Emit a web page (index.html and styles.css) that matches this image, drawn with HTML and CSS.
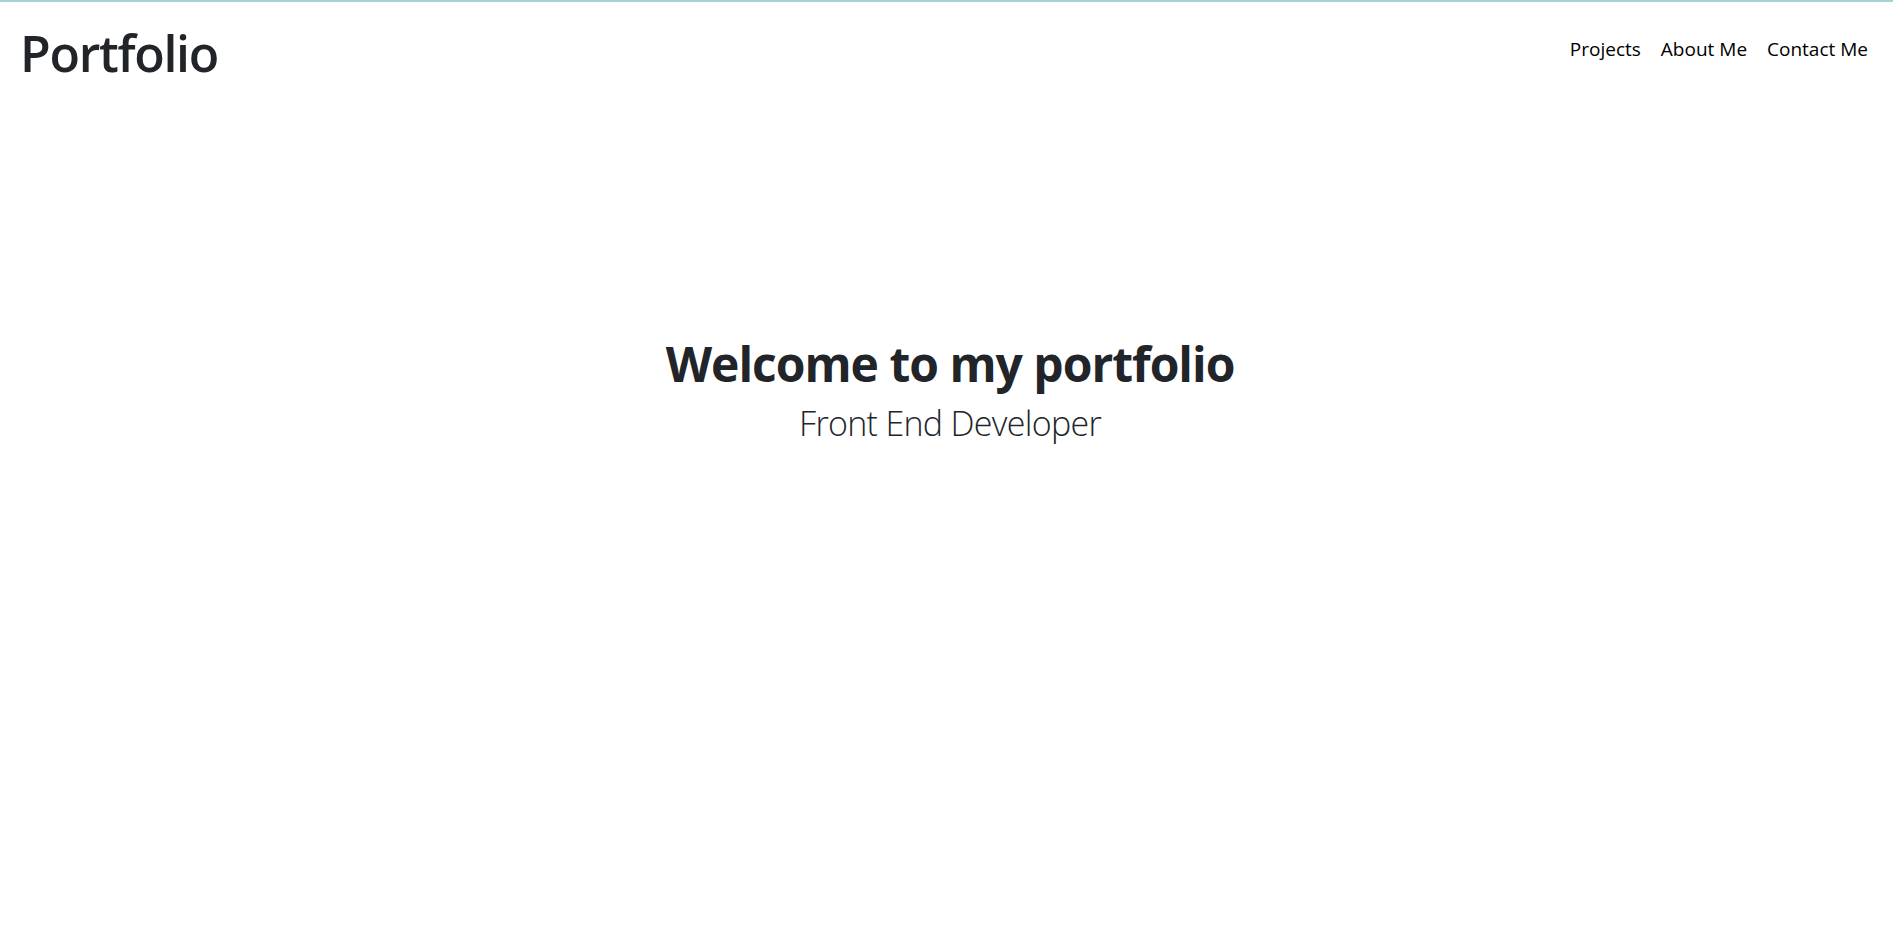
FILE: index.html
```html
<!DOCTYPE html>
<html lang="en">
<head>
<meta charset="utf-8">
<title>Portfolio</title>
<link rel="stylesheet" href="styles.css">
</head>
<body>
<header class="topbar">
  <h1 class="brand">Portfolio</h1>
  <nav class="nav">
    <a class="nav-link" href="#projects">Projects</a>
    <a class="nav-link" href="#about">About Me</a>
    <a class="nav-link" href="#contact">Contact Me</a>
  </nav>
</header>
<main class="hero">
  <h2 class="hero-title">Welcome to my portfolio</h2>
  <p class="hero-sub">Front End Developer</p>
</main>
</body>
</html>
```

FILE: styles.css
```css
* { box-sizing: border-box; }
html, body {
  margin: 0;
  padding: 0;
  background: #fff;
}
body {
  font-family: "Open Sans", "Noto Sans", sans-serif;
  color: #212529;
  border-top: 2px solid #a6d1d5;
  min-height: 932px;
}
.topbar {
  display: flex;
  justify-content: space-between;
  align-items: center;
  padding: 21px 25px 0 20px;
}
.brand {
  margin: 0;
  font-size: 50px;
  font-weight: 600;
  line-height: 1.2;
  letter-spacing: -1.3px;
  color: #212529;
}
.nav {
  display: flex;
  gap: 20px;
  padding-bottom: 8px;
}
.nav-link {
  font-size: 19px;
  line-height: 1.5;
  color: #000;
  text-decoration: none;
}
.hero {
  display: flex;
  flex-direction: column;
  align-items: center;
  text-align: center;
  padding: 252px 0 0 7px;
}
.hero-title {
  margin: 0;
  font-size: 48px;
  font-weight: 700;
  line-height: 1.2;
  letter-spacing: -1px;
}
.hero-sub {
  margin: 10px 0 0;
  font-size: 34px;
  font-weight: 300;
  line-height: 1.2;
  letter-spacing: -0.7px;
}
```
